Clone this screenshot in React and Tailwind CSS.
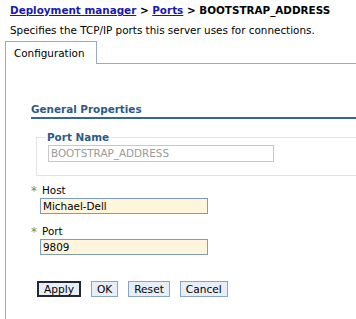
import React from 'react';

const font = { fontFamily: '"DejaVu Sans", Verdana, sans-serif' };

const Required = ({ label, value }) => (
    <div className="flex flex-col">
        <div className="flex items-center h-[13px]">
            <span className="text-[#8a8a1a] text-[12px] w-[11px] leading-none">*</span>
            <span className="text-black">{label}</span>
        </div>
        <div className="ml-[9px] mt-[1px] w-[168px] h-[16px] border border-[#7f9db9] bg-[#fff5dc] pl-[2px] leading-[14px] text-black">
            {value}
        </div>
    </div>
);

const Btn = ({ children, main }) => (
    <button
        className={
            'h-[16px] leading-[12px] bg-[#e8eef7] text-black text-[10.6px] ' +
            (main ? 'px-[5px] border-2 border-[#1f2a38]' : 'px-[5px] border border-[#8aa4c8]')
        }
        style={font}
    >
        {children}
    </button>
);

export default function App() {
    return (
        <div className="w-[356px] h-[319px] overflow-hidden bg-white text-[10.4px] text-black" style={font}>
            {/* Breadcrumb */}
            <div className="pl-[10px] pt-[4px] h-[24px] font-bold leading-[13px]">
                <a className="text-[#1818b0] underline">Deployment manager</a>
                <span> &gt; </span>
                <a className="text-[#1818b0] underline">Ports</a>
                <span> &gt; BOOTSTRAP_ADDRESS</span>
            </div>
            <div className="pl-[10px] h-[17px] leading-[13px]">
                Specifies the TCP/IP ports this server uses for connections.
            </div>

            {/* Tabs */}
            <div className="flex pl-[5px]">
                <div className="w-[92px] h-[23px] border-l border-t border-r border-[#9aaac4] pl-[8px] pt-[5px] leading-[13px]">
                    Configuration
                </div>
                <div className="flex-1 border-b border-[#9aaac4]" />
            </div>

            {/* Panel */}
            <div className="ml-[5px] border-l border-[#9aaac4] h-[260px] pl-[25px] pt-[39px]">
                <div className="font-bold text-[#2d5a87] leading-[13px] pb-[1px] border-b-2 border-[#336699]">
                    General Properties
                </div>

                <div className="relative mt-[18px] ml-[5px] h-[39px] border border-[#e2e2e2] border-r-0">
                    <span className="absolute left-[9px] -top-[6px] bg-white px-[1px] font-bold text-[#2d5a87] leading-[11px]">
                        Port Name
                    </span>
                    <div className="ml-[11px] mt-[7px] w-[226px] h-[17px] border border-[#c8c8c8] pl-[2px] leading-[15px] text-[#9a9a9a]">
                        BOOTSTRAP_ADDRESS
                    </div>
                </div>

                <div className="mt-[8px] flex flex-col gap-[11px]">
                    <Required label="Host" value="Michael-Dell" />
                    <Required label="Port" value="9809" />
                </div>

                <div className="mt-[26px] ml-[6px] flex gap-[10px]">
                    <Btn main>Apply</Btn>
                    <Btn>OK</Btn>
                    <Btn>Reset</Btn>
                    <Btn>Cancel</Btn>
                </div>
            </div>
        </div>
    );
}
